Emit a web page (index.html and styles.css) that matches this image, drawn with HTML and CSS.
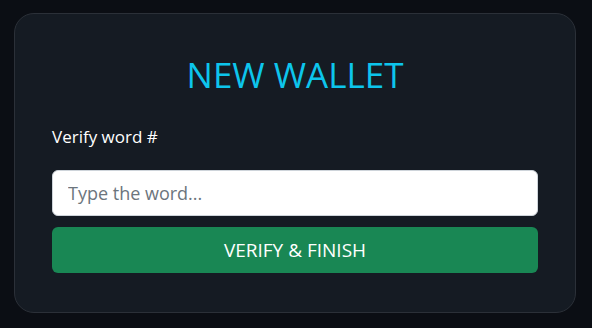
FILE: index.html
```html
<!DOCTYPE html>
<html>
<head>
<meta charset="utf-8">
<link rel="stylesheet" href="styles.css">
</head>
<body>
<div class="card">
  <h1 class="title">NEW WALLET</h1>
  <label class="label" for="w">Verify word #</label>
  <input id="w" class="input" type="text" placeholder="Type the word...">
  <button class="btn">VERIFY &amp; FINISH</button>
</div>
</body>
</html>
```

FILE: styles.css
```css
html, body {
  margin: 0;
  padding: 0;
  background: #0b0e14;
  width: 592px;
  height: 328px;
  overflow: hidden;
}
body {
  padding: 13px 0 0 14px;
  box-sizing: border-box;
  font-family: "Open Sans", "Noto Sans", sans-serif;
}
.card {
  width: 562px;
  height: 300px;
  box-sizing: border-box;
  background: #151b23;
  border: 1px solid #2b3038;
  border-radius: 20px;
  padding: 0 37px;
  display: flex;
  flex-direction: column;
}
.title {
  margin: 41px 0 0;
  text-align: center;
  color: #0dc5ec;
  font-weight: 400;
  font-size: 35px;
  line-height: 40px;
}
.label {
  margin-top: 31px;
  color: #ffffff;
  font-size: 17px;
  line-height: 22px;
}
.input {
  margin-top: 22px;
  height: 46px;
  flex: none;
  box-sizing: border-box;
  border: 1px solid #ced4da;
  border-radius: 6px;
  background: #fff;
  padding: 0 15px;
  font-family: inherit;
  font-size: 18px;
  color: #212529;
  outline: none;
}
.input::placeholder {
  color: #6c757d;
}
.btn {
  margin-top: 11px;
  height: 46px;
  flex: none;
  border: none;
  border-radius: 6px;
  background: #198754;
  color: #fff;
  font-family: inherit;
  font-size: 19px;
  cursor: pointer;
}
```
